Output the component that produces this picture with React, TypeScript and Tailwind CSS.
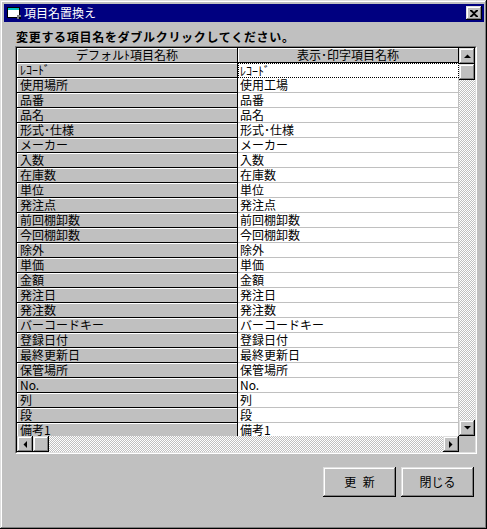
import React from 'react';

const FONT = { fontFamily: '"Noto Sans CJK JP", "Noto Sans", sans-serif' };

const rows: [string, string][] = [
  ['ﾚｺｰﾄﾞ', 'ﾚｺｰﾄﾞ'],
  ['使用場所', '使用工場'],
  ['品番', '品番'],
  ['品名', '品名'],
  ['形式･仕様', '形式･仕様'],
  ['メーカー', 'メーカー'],
  ['入数', '入数'],
  ['在庫数', '在庫数'],
  ['単位', '単位'],
  ['発注点', '発注点'],
  ['前回棚卸数', '前回棚卸数'],
  ['今回棚卸数', '今回棚卸数'],
  ['除外', '除外'],
  ['単価', '単価'],
  ['金額', '金額'],
  ['発注日', '発注日'],
  ['発注数', '発注数'],
  ['バーコードキー', 'バーコードキー'],
  ['登録日付', '登録日付'],
  ['最終更新日', '最終更新日'],
  ['保管場所', '保管場所'],
  ['No.', 'No.'],
  ['列', '列'],
  ['段', '段'],
  ['備考1', '備考1'],
];

const raised =
  'shadow-[inset_-1px_-1px_#000,inset_1px_1px_#dfdfdf,inset_-2px_-2px_#808080,inset_2px_2px_#fff]';
const checker =
  'bg-[image:conic-gradient(#fff_25%,#c0c0c0_0_50%,#fff_0_75%,#c0c0c0_0)] bg-[length:2px_2px]';

function Arrow({ dir }: { dir: 'up' | 'down' | 'left' | 'right' }) {
  const pts = {
    up: '0,4 7,4 3.5,0.5',
    down: '0,0 7,0 3.5,3.5',
    left: '4,0 4,7 0.5,3.5',
    right: '0,0 0,7 3.5,3.5',
  }[dir];
  const vertical = dir === 'up' || dir === 'down';
  return (
    <svg width={vertical ? 7 : 4} height={vertical ? 4 : 7} viewBox={vertical ? '0 0 7 4' : '0 0 4 7'}>
      <polygon points={pts} fill="#000" />
    </svg>
  );
}

function ScrollButton({ dir }: { dir?: 'up' | 'down' | 'left' | 'right' }) {
  return (
    <div className={`w-[16px] h-[16px] shrink-0 bg-[#c0c0c0] flex items-center justify-center ${raised}`}>
      {dir && <Arrow dir={dir} />}
    </div>
  );
}

function TitleIcon() {
  return (
    <svg width="16" height="16" viewBox="0 0 16 16">
      <rect x="1.5" y="2.5" width="12" height="10" fill="#fff" stroke="#000" />
      <rect x="2" y="3" width="11" height="2" fill="#00c0c0" />
      <rect x="11" y="10" width="4" height="4" fill="#808080" />
      <rect x="13" y="12" width="2" height="2" fill="#000" />
    </svg>
  );
}

function WinButton({ label }: { label: string }) {
  return (
    <button
      className={`w-[73px] h-[30px] bg-[#c0c0c0] text-[12px] text-black flex items-center justify-center [word-spacing:4px] ${raised}`}
      style={FONT}
    >
      {label}
    </button>
  );
}

export default function App() {
  return (
    <div
      className="w-[487px] h-[529px] bg-[#c0c0c0] flex flex-col pt-[4px] pl-[4px] pr-[3px] shadow-[inset_-1px_-1px_#000,inset_1px_1px_#dfdfdf,inset_-2px_-2px_#808080,inset_2px_2px_#fff] overflow-hidden"
      style={FONT}
    >
      {/* Title bar */}
      <div className="h-[18px] bg-[#000080] flex items-center pl-[2px] pr-[2px] shrink-0">
        <TitleIcon />
        <span className="ml-[2px] text-[12px] leading-none text-white">項目名置換え</span>
        <div className="flex-1" />
        <div className={`w-[16px] h-[14px] bg-[#c0c0c0] flex items-center justify-center ${raised}`}>
          <svg width="8" height="7" viewBox="0 0 8 7">
            <path d="M0 0h2l2 2 2-2h2v1L5 3.5 8 6v1H6L4 5 2 7H0V6l3-2.5L0 1z" fill="#000" />
          </svg>
        </div>
      </div>

      {/* Label */}
      <div className="h-[24px] pl-[12px] flex items-end pb-[1px] shrink-0">
        <span className="text-[12px] font-bold tracking-[0.7px] leading-[16px] text-black">
          変更する項目名をダブルクリックしてください。
        </span>
      </div>

      {/* Grid */}
      <div className="ml-[11px] w-[462px] h-[408px] border border-t-[#808080] border-l-[#808080] border-b-white border-r-white shrink-0">
        <div className="w-full h-full border border-t-black border-l-black border-b-[#dfdfdf] border-r-[#dfdfdf] flex flex-col">
          <div className="flex-1 flex min-h-0">
            <div className="w-[442px] flex flex-col overflow-hidden text-[12px] leading-[14px] text-black">
              <div className="flex h-[15px] shrink-0">
                <div className="w-[221px] bg-[#c0c0c0] border-r border-b border-black shadow-[inset_1px_1px_#fff] text-center">
                  デフォルﾄ項目名称
                </div>
                <div className="w-[221px] bg-[#c0c0c0] border-r border-b border-black shadow-[inset_1px_1px_#fff] text-center">
                  表示･印字項目名称
                </div>
              </div>
              {rows.map(([a, b], i) => (
                <div key={i} className="flex h-[15px] shrink-0">
                  <div className="w-[221px] bg-[#c0c0c0] border-r border-b border-black shadow-[inset_1px_1px_#fff] pl-[3px] whitespace-nowrap">
                    {a}
                  </div>
                  {i === 0 ? (
                    <div className="w-[221px] bg-white border border-dotted border-black pl-[1px] leading-[13px] whitespace-nowrap">
                      {b}
                    </div>
                  ) : (
                    <div className="w-[221px] bg-white border-r border-b border-[#c0c0c0] pl-[2px] whitespace-nowrap">
                      {b}
                    </div>
                  )}
                </div>
              ))}
            </div>
            {/* Vertical scrollbar */}
            <div className="w-[16px] flex flex-col">
              <ScrollButton dir="up" />
              <ScrollButton />
              <div className={`flex-1 ${checker}`} />
              <ScrollButton dir="down" />
            </div>
          </div>
          {/* Horizontal scrollbar */}
          <div className="h-[16px] flex shrink-0">
            <ScrollButton dir="left" />
            <ScrollButton />
            <div className={`flex-1 ${checker}`} />
            <ScrollButton dir="right" />
            <div className="w-[16px] h-[16px] bg-[#c0c0c0]" />
          </div>
        </div>
      </div>

      {/* Buttons */}
      <div className="flex justify-end gap-[5px] mt-[13px] pr-[10px]">
        <WinButton label="更 新" />
        <WinButton label="閉じる" />
      </div>
    </div>
  );
}
